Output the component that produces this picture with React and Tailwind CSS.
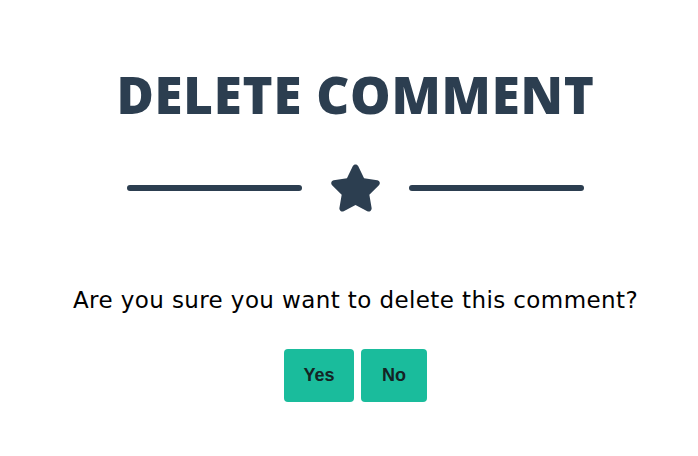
import React from 'react';
import { FaStar } from 'react-icons/fa6';

export default function App() {
  return (
    <div className="w-[698px] h-[456px] bg-white pl-[13px] flex flex-col items-center">
      {/* Heading */}
      <h2
        className="mt-[62px] text-[51px] leading-[64px] font-extrabold uppercase tracking-[0.015em] text-[#2c3e50]"
        style={{ fontFamily: '"Open Sans", sans-serif' }}
      >
        Delete Comment
      </h2>

      {/* Divider */}
      <div className="mt-[38px] flex items-center justify-center">
        <div className="w-[175px] h-[6px] rounded-full bg-[#2c3e50]" />
        <div className="mx-[27px] flex items-center justify-center">
          <FaStar className="w-[53px] h-[48px] text-[#2c3e50]" />
        </div>
        <div className="w-[175px] h-[6px] rounded-full bg-[#2c3e50]" />
      </div>

      {/* Message */}
      <p
        className="mt-[72px] text-[23px] leading-[32px] tracking-[0.4px] text-black"
        style={{ fontFamily: '"DejaVu Sans", sans-serif' }}
      >
        Are you sure you want to delete this comment?
      </p>

      {/* Actions */}
      <div className="mt-[33px] flex gap-[7px]">
        <button
          className="w-[70px] h-[53px] rounded-[4px] bg-[#1abc9c] text-[18px] font-bold text-[#142424]"
          style={{ fontFamily: '"Liberation Sans", Arial, sans-serif' }}
        >
          Yes
        </button>
        <button
          className="w-[66px] h-[53px] rounded-[4px] bg-[#1abc9c] text-[18px] font-bold text-[#142424]"
          style={{ fontFamily: '"Liberation Sans", Arial, sans-serif' }}
        >
          No
        </button>
      </div>
    </div>
  );
}
